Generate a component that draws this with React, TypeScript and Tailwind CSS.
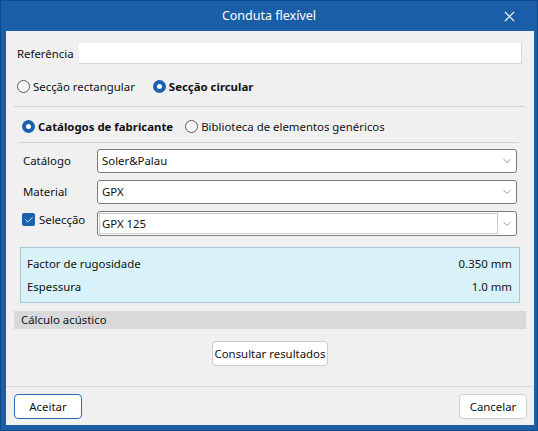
import { X, ChevronDown, Check } from "lucide-react";

const font = { fontFamily: '"Noto Sans", "Liberation Sans", sans-serif' };

const Radio = ({ checked, label }: { checked?: boolean; label: string }) => (
  <div className="flex items-center">
    {checked ? (
      <span className="w-[13px] h-[13px] rounded-full bg-[#1a5fb0] flex items-center justify-center">
        <span className="w-[5px] h-[5px] rounded-full bg-white" />
      </span>
    ) : (
      <span className="w-[13px] h-[13px] rounded-full border border-[#5a5a5a] bg-[#f8f8f8]" />
    )}
    <span className={`ml-[3px] ${checked ? "font-bold" : ""}`}>{label}</span>
  </div>
);

const Chevron = () => (
  <div className="w-[18px] flex justify-center">
    <ChevronDown size={12} strokeWidth={1.3} className="text-[#555555]" />
  </div>
);

const Select = ({ value }: { value: string }) => (
  <div className="flex-1 h-[24px] bg-white border border-[#7a7a7a] rounded-[3px] flex items-center">
    <div className="flex-1 pl-[4px]">{value}</div>
    <Chevron />
  </div>
);

export default function App() {
  return (
    <div
      style={font}
      className="w-[538px] h-[431px] bg-[#1a5ea8] border border-[#0e4a8c] flex flex-col pl-[5px] pr-[3px] pb-[5px] text-[11.4px] text-[#111111]"
    >
      <div className="h-[30px] -ml-[5px] -mr-[3px] grid grid-cols-[1fr_auto_1fr] items-center text-white">
        <div />
        <div className="text-[12.5px]">Conduta flexível</div>
        <div className="flex justify-end pr-[19px]">
          <X size={17} strokeWidth={1.5} />
        </div>
      </div>
      <div className="flex-1 bg-[#f0f0f0] flex flex-col">
        <div className="flex-1 flex flex-col pl-[8px] pr-[8px]">
          <div className="mt-[12px] flex items-center pl-[3px] pr-[4px]">
            <span className="w-[62px]">Referência</span>
            <div className="flex-1 h-[21px] bg-white border-b border-r border-[#d6d6d6]" />
          </div>
          <div className="mt-[13px] h-[20px] flex items-center pl-[3px] gap-[18px]">
            <Radio label="Secção rectangular" />
            <Radio checked label="Secção circular" />
          </div>
          <div className="mt-[9px] h-px bg-[#d2d2d2] mr-px" />
          <div className="flex flex-col pl-[5px] pr-[7px]">
            <div className="mt-[10px] h-[20px] flex items-center pl-[3px] gap-[12px]">
              <Radio checked label="Catálogos de fabricante" />
              <Radio label="Biblioteca de elementos genéricos" />
            </div>
            <div className="mt-[5px] h-px bg-[#d2d2d2]" />
            <div className="mt-[6px] flex items-center pl-[4px] pr-[2px]">
              <span className="w-[74px]">Catálogo</span>
              <Select value="Soler&Palau" />
            </div>
            <div className="mt-[7px] flex items-center pl-[4px] pr-[2px]">
              <span className="w-[74px]">Material</span>
              <Select value="GPX" />
            </div>
            <div className="mt-[7px] flex items-start pl-[3px] pr-[2px]">
              <div className="w-[75px] flex items-center h-[15px] mt-[1px]">
                <span className="w-[13px] h-[13px] rounded-[2px] bg-[#1a5fb0] flex items-center justify-center">
                  <Check size={10} strokeWidth={2} className="text-white" />
                </span>
                <span className="ml-[4px]">Selecção</span>
              </div>
              <div className="flex-1 h-[25px] bg-white border border-[#7a7a7a] rounded-[3px] flex items-center">
                <div className="ml-[1px] flex-1 h-[21px] border border-[#c8c8c8] flex items-center pl-[2px]">GPX 125</div>
                <Chevron />
              </div>
            </div>
            <div className="mt-[11px] h-[56px] bg-[#d9f2f9] border border-[#a6c8d2] flex flex-col justify-center gap-[6px] pl-[6px] pr-[7px] ml-px -mr-px">
              <div className="flex justify-between">
                <span>Factor de rugosidade</span>
                <span>0.350 mm</span>
              </div>
              <div className="flex justify-between">
                <span>Espessura</span>
                <span>1.0 mm</span>
              </div>
            </div>
          </div>
          <div className="mt-[8px] h-[18px] bg-[#d9d9d9] flex items-center pl-[7px]">Cálculo acústico</div>
          <div className="mt-[12px] flex justify-center">
            <button className="w-[116px] h-[25px] bg-white border border-[#cccccc] rounded-[4px]">Consultar resultados</button>
          </div>
        </div>
        <div className="h-[39px] border-t border-[#d8d8d8] flex items-start justify-between pl-[8px] pr-[7px] pt-[7px]">
          <button className="w-[68px] h-[25px] bg-white border border-[#2a6ab8] rounded-[4px]">Aceitar</button>
          <button className="w-[68px] h-[25px] bg-white border border-[#d0d0d0] rounded-[4px]">Cancelar</button>
        </div>
      </div>
    </div>
  );
}
